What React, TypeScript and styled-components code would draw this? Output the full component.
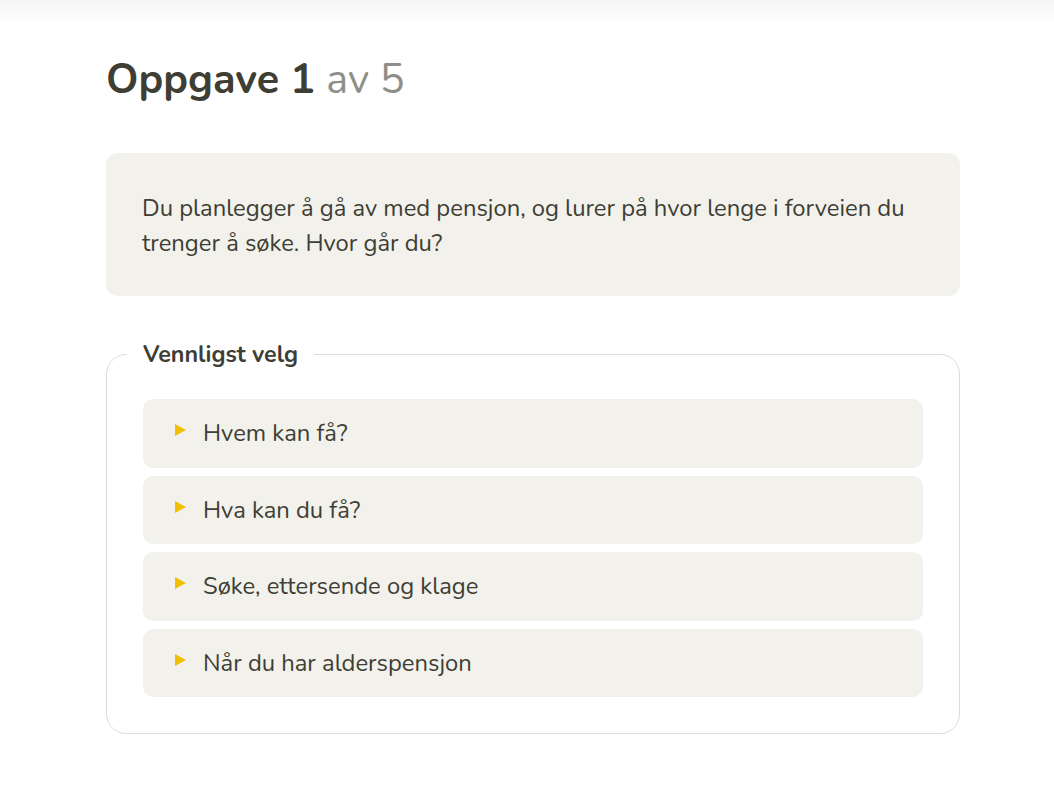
import React, { FC } from 'react'
import styled, { createGlobalStyle } from 'styled-components'

const options = ['Hvem kan få?', 'Hva kan du få?', 'Søke, ettersende og klage', 'Når du har alderspensjon']

const App: FC = () => {
	return (
		<>
			<GlobalStyle />
			<StyledTopShade />
			<StyledMain>
				<StyledTitle>
					Oppgave 1 <StyledTitleCount>av 5</StyledTitleCount>
				</StyledTitle>
				<StyledQuestion>
					Du planlegger å gå av med pensjon, og lurer på hvor lenge i forveien du trenger å søke. Hvor går du?
				</StyledQuestion>
				<StyledFieldset>
					<StyledLegend>Vennligst velg</StyledLegend>
					<StyledOptionList>
						{options.map((option) => (
							<StyledOption key={option}>
								<StyledArrow />
								{option}
							</StyledOption>
						))}
					</StyledOptionList>
				</StyledFieldset>
			</StyledMain>
		</>
	)
}

export default App

const GlobalStyle = createGlobalStyle`
	* {
		box-sizing: border-box;
	}
	body {
		margin: 0;
		background: #fff;
		font-family: Nunito, Lato, 'Open Sans', sans-serif;
		color: #3e3e34;
	}
`

const StyledTopShade = styled.div`
	height: 24px;
	background: linear-gradient(to bottom, #f5f5f5, #ffffff);
`

const StyledMain = styled.main`
	width: 854px;
	margin-left: 106px;
	padding-bottom: 54px;
`

const StyledTitle = styled.h1`
	margin: 28px 0 45px;
	font-size: 41.3px;
	line-height: 56px;
	font-weight: 700;
	color: #3e3e34;
`

const StyledTitleCount = styled.span`
	font-weight: 400;
	color: #8f8f89;
`

const StyledQuestion = styled.p`
	margin: 0 0 42px;
	padding: 38px 36px 35px;
	background: #f2f1ec;
	border-radius: 12px;
	font-size: 23.8px;
	line-height: 35px;
`

const StyledFieldset = styled.fieldset`
	margin: 0;
	padding: 0 36px 36px;
	border: 1px solid #dcdcdc;
	border-radius: 20px;
`

const StyledLegend = styled.legend`
	margin-left: -16px;
	padding: 0 16px;
	font-size: 23.3px;
	line-height: 32px;
	font-weight: 700;
`

const StyledOptionList = styled.div`
	display: flex;
	flex-direction: column;
	gap: 8px;
	margin-top: 29px;
`

const StyledOption = styled.div`
	display: flex;
	align-items: center;
	gap: 17px;
	height: 68.5px;
	padding: 0 32px;
	background: #f2f1ec;
	border-radius: 10px;
	font-size: 23.8px;
	cursor: pointer;
`

const StyledArrow = styled.span`
	width: 0;
	height: 0;
	margin-top: -6px;
	border-top: 6px solid transparent;
	border-bottom: 6px solid transparent;
	border-left: 11px solid #efbf00;
`
